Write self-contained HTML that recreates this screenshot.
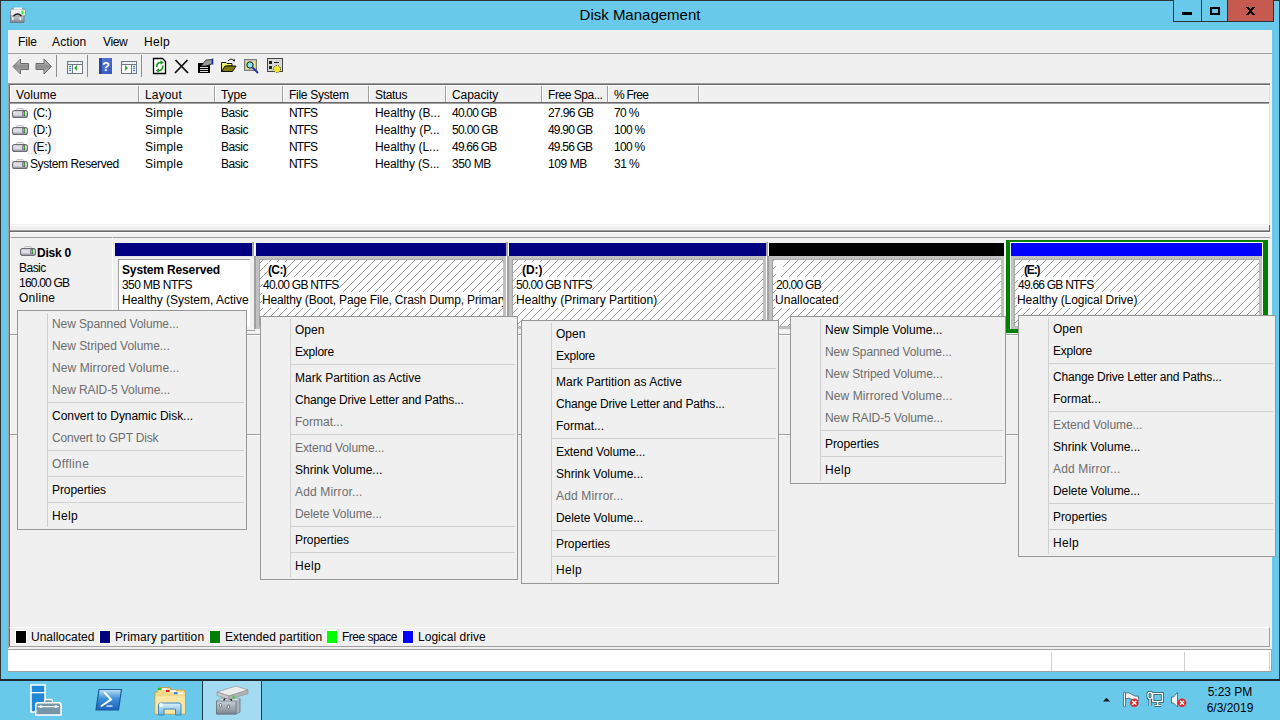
<!DOCTYPE html><html><head><meta charset="utf-8"><style>
html,body{margin:0;padding:0;}
body{width:1280px;height:720px;overflow:hidden;position:relative;background:#69c9ea;font-family:"Liberation Sans", sans-serif;font-size:12px;color:#000;}
div,span,svg{position:absolute;box-sizing:border-box;}
.t{white-space:pre;line-height:16px;letter-spacing:-0.2px;}
.d{color:#6d6d6d;}
.b{font-weight:bold;}
</style></head><body>
<div style="left:0px;top:0px;width:1280px;height:1px;background:#2e3436"></div>
<div style="left:0px;top:0px;width:1px;height:680px;background:#2e3436"></div>
<div style="left:1279px;top:0px;width:1px;height:680px;background:#2e3436"></div>
<div style="left:0px;top:679px;width:1280px;height:1px;background:#2e3436"></div>
<span class="t" style="left:0;top:6px;width:1280px;text-align:center;font-size:15px;line-height:18px;letter-spacing:0;color:#000">Disk Management</span>
<svg style="left:10px;top:7px" width="16" height="16" viewBox="0 0 16 16">
<defs><linearGradient id="tig" x1="0" y1="0" x2="0" y2="1"><stop offset="0" stop-color="#d0d8e0"/><stop offset="1" stop-color="#7a8290"/></linearGradient></defs>
<rect x="0.5" y="8.5" width="13.5" height="7" fill="url(#tig)" stroke="#6a7078" stroke-width="0.8"/>
<rect x="2" y="10.5" width="1.5" height="2.5" fill="#fff"/><rect x="9.5" y="10.5" width="1.5" height="2.5" fill="#fff"/>
<rect x="0.5" y="2" width="15" height="7" rx="1.5" fill="#ececf2" stroke="#7a7a80" stroke-width="0.8"/>
<rect x="4" y="0.5" width="8" height="2" fill="#f4f4f4"/>
<path d="M3.5 9 Q7.5 5 11.5 9" stroke="#222" stroke-width="1.3" fill="none"/>
<rect x="11.5" y="3.5" width="2" height="4" fill="#30f030"/>
</svg>
<div style="left:1173px;top:0px;width:29px;height:22px;border:1px solid #2e3436;border-top:none;background:#69c9ea"></div>
<div style="left:1201px;top:0px;width:27px;height:22px;border:1px solid #2e3436;border-top:none;background:#69c9ea"></div>
<div style="left:1227px;top:0px;width:47px;height:22px;border:1px solid #2e3436;border-top:none;background:#c65a4e"></div>
<div style="left:1182px;top:12px;width:10px;height:3px;background:#000"></div>
<div style="left:1210px;top:7px;width:10px;height:8px;border:2px solid #000;border-top-width:2px"></div>
<svg style="left:1246px;top:7px" width="9" height="8" viewBox="0 0 9 8" shape-rendering="crispEdges"><path d="M0 0h1v1h-1zM1 0h1v1h-1zM2 0h1v1h-1zM6 0h1v1h-1zM7 0h1v1h-1zM8 0h1v1h-1zM1 1h1v1h-1zM2 1h1v1h-1zM3 1h1v1h-1zM5 1h1v1h-1zM6 1h1v1h-1zM7 1h1v1h-1zM2 2h1v1h-1zM3 2h1v1h-1zM4 2h1v1h-1zM5 2h1v1h-1zM6 2h1v1h-1zM3 3h1v1h-1zM4 3h1v1h-1zM5 3h1v1h-1zM3 4h1v1h-1zM4 4h1v1h-1zM5 4h1v1h-1zM2 5h1v1h-1zM3 5h1v1h-1zM4 5h1v1h-1zM5 5h1v1h-1zM6 5h1v1h-1zM1 6h1v1h-1zM2 6h1v1h-1zM3 6h1v1h-1zM5 6h1v1h-1zM6 6h1v1h-1zM7 6h1v1h-1zM0 7h1v1h-1zM1 7h1v1h-1zM2 7h1v1h-1zM6 7h1v1h-1zM7 7h1v1h-1zM8 7h1v1h-1z" fill="#000"/></svg>
<div style="left:8px;top:30px;width:1264px;height:642px;background:#f0f0f0"></div>
<span class="t" style="left:18px;top:34px;;letter-spacing:-0.133px">File</span>
<span class="t" style="left:52px;top:34px;;letter-spacing:0.160px">Action</span>
<span class="t" style="left:103px;top:34px;;letter-spacing:-0.367px">View</span>
<span class="t" style="left:144px;top:34px;;letter-spacing:0.300px">Help</span>
<div style="left:8px;top:53px;width:1264px;height:1px;background:#a0a0a0"></div>
<svg style="left:0;top:0" width="300" height="80" viewBox="0 0 300 80">
<defs>
<linearGradient id="ag" x1="0" y1="0" x2="0" y2="1"><stop offset="0" stop-color="#d0d0d0"/><stop offset="0.5" stop-color="#8c8c8c"/><stop offset="1" stop-color="#c4c4c4"/></linearGradient>
<linearGradient id="hg" x1="0" y1="0" x2="1" y2="1"><stop offset="0" stop-color="#5a7fe0"/><stop offset="1" stop-color="#3455b8"/></linearGradient>
</defs>
<path d="M13 66.5 L20.5 59 V63.5 H28.5 V69.5 H20.5 V74 Z" fill="url(#ag)" stroke="#6a6a6a" stroke-linejoin="round"/>
<path d="M51.5 66.5 L44 59 V63.5 H36 V69.5 H44 V74 Z" fill="url(#ag)" stroke="#6a6a6a" stroke-linejoin="round"/>
<rect x="56" y="55" width="1" height="22" fill="#8c8c8c"/>
<rect x="67.5" y="61.5" width="15" height="12" fill="#fff" stroke="#707b88"/>
<rect x="68" y="62" width="14" height="3" fill="#dfe3e8"/>
<rect x="69" y="62.5" width="9" height="1" fill="#fff"/><rect x="79" y="62" width="1" height="2" fill="#fff"/><rect x="81" y="62" width="1" height="2" fill="#fff"/>
<rect x="68" y="64" width="14" height="1" fill="#707b88"/>
<rect x="72" y="65" width="1" height="8" fill="#707b88"/>
<rect x="68" y="65" width="4" height="8" fill="#e8edf2"/>
<rect x="69" y="66" width="2" height="1" fill="#3a80c8"/><rect x="69" y="68" width="2" height="1" fill="#3a80c8"/><rect x="69" y="70" width="2" height="1" fill="#3a80c8"/>
<path d="M77 65 L74 68 L77 71Z" fill="#30b030"/>
<rect x="87" y="55" width="1" height="22" fill="#8c8c8c"/>
<rect x="99" y="58" width="13" height="16" fill="url(#hg)"/>
<rect x="99" y="58" width="3" height="16" fill="#2a48a0"/>
<text x="106" y="71" font-size="13" font-family="Liberation Sans" font-weight="bold" fill="#fff" text-anchor="middle">?</text>
<rect x="121.5" y="61.5" width="15" height="12" fill="#fff" stroke="#707b88"/>
<rect x="122" y="62" width="14" height="3" fill="#dfe3e8"/>
<rect x="123" y="62.5" width="9" height="1" fill="#fff"/><rect x="133" y="62" width="1" height="2" fill="#fff"/><rect x="135" y="62" width="1" height="2" fill="#fff"/>
<rect x="122" y="64" width="14" height="1" fill="#707b88"/>
<rect x="131" y="65" width="1" height="8" fill="#707b88"/>
<rect x="132" y="65" width="4" height="8" fill="#e8edf2"/>
<rect x="133" y="66" width="2" height="1" fill="#3a80c8"/><rect x="133" y="68" width="2" height="1" fill="#3a80c8"/><rect x="133" y="70" width="2" height="1" fill="#3a80c8"/>
<path d="M125 65 L128 68 L125 71Z" fill="#30b030"/>
<rect x="141" y="55" width="1" height="22" fill="#8c8c8c"/>
<path d="M153.5 58.5 H162.5 L165.5 61.5 V73.5 H153.5 Z" fill="#fff" stroke="#000" stroke-width="1.3"/>
<path d="M156.8 67 Q156.5 62.5 161 62.5" stroke="#1e9a1e" stroke-width="1.7" fill="none"/>
<path d="M160.5 60.3 L163.8 62.5 L160.5 64.7Z" fill="#1e9a1e"/>
<path d="M162.8 65.5 Q163 70.5 158.5 70.5" stroke="#1e9a1e" stroke-width="1.7" fill="none"/>
<path d="M159 68.3 L155.7 70.5 L159 72.7Z" fill="#1e9a1e"/>
<path d="M175.5 60 L188 73 M187.5 60 L175 73" stroke="#111" stroke-width="1.8"/>
<rect x="198" y="63" width="12" height="10" fill="#000"/>
<rect x="200" y="67" width="8" height="1" fill="#e0e0e0"/><rect x="200" y="69" width="8" height="1" fill="#e0e0e0"/><rect x="200" y="71" width="8" height="1" fill="#e0e0e0"/>
<path d="M201 66 L206 60 L212 59.5 V64 L206 66Z" fill="#9a9a9a" stroke="#222" stroke-width="0.8"/>
<rect x="212" y="58.5" width="1.3" height="6" fill="#1a2ab0"/>
<path d="M221.5 62.5 H226 L227 63.5 H232 V66 H227 L225 71.5 H221.5 Z" fill="#f0f070" stroke="#000" stroke-width="0.9"/>
<path d="M225 66 H236 L232.5 71.5 H221.5Z" fill="#807a10" stroke="#000" stroke-width="0.9"/>
<path d="M228 61 Q231 57.5 234 60.5" stroke="#222" fill="none" stroke-width="1"/>
<path d="M234.5 58.5 L235 61.5 L232.5 61Z" fill="#222"/>
<rect x="244.5" y="59.5" width="12" height="11" fill="#c0c0c0" stroke="#7a7a7a"/>
<rect x="246" y="61" width="9" height="8" fill="#e8e890"/>
<circle cx="250" cy="65" r="3.2" fill="#80e8f0" stroke="#111" stroke-width="1"/>
<path d="M252.5 67.5 L258 73" stroke="#1a2ab0" stroke-width="1.8"/>
<rect x="267.5" y="58.5" width="15" height="13" fill="#d8d8d8" stroke="#444"/>
<rect x="269" y="61" width="3" height="3" fill="#222"/><rect x="269" y="66" width="3" height="3" fill="#222"/>
<rect x="274" y="62" width="5" height="1" fill="#222"/><rect x="274" y="67" width="3" height="1" fill="#222"/>
<circle cx="277" cy="69" r="3.6" fill="#f0e830" stroke="#333" stroke-width="0.8" stroke-dasharray="1.5 1"/>
</svg>
<div style="left:8px;top:83px;width:1262px;height:141px;background:#fff"></div>
<div style="left:8px;top:83px;width:1262px;height:1px;background:#a0a0a0"></div>
<div style="left:8px;top:84px;width:1262px;height:1px;background:#696969"></div>
<div style="left:8px;top:83px;width:1px;height:565px;background:#a0a0a0"></div>
<div style="left:9px;top:84px;width:1px;height:563px;background:#696969"></div>
<div style="left:1269px;top:85px;width:1px;height:139px;background:#e3e3e3"></div>
<div style="left:10px;top:85px;width:1259px;height:17px;background:#f0f0f0;border-top:1px solid #fff;border-left:1px solid #fff"></div>
<div style="left:10px;top:102px;width:1259px;height:1px;background:#696969"></div>
<div style="left:10px;top:103px;width:1259px;height:1px;background:#a0a0a0"></div>
<div style="left:138px;top:86px;width:1px;height:16px;background:#a0a0a0"></div>
<div style="left:139px;top:86px;width:1px;height:16px;background:#fff"></div>
<div style="left:214px;top:86px;width:1px;height:16px;background:#a0a0a0"></div>
<div style="left:215px;top:86px;width:1px;height:16px;background:#fff"></div>
<div style="left:282px;top:86px;width:1px;height:16px;background:#a0a0a0"></div>
<div style="left:283px;top:86px;width:1px;height:16px;background:#fff"></div>
<div style="left:368px;top:86px;width:1px;height:16px;background:#a0a0a0"></div>
<div style="left:369px;top:86px;width:1px;height:16px;background:#fff"></div>
<div style="left:445px;top:86px;width:1px;height:16px;background:#a0a0a0"></div>
<div style="left:446px;top:86px;width:1px;height:16px;background:#fff"></div>
<div style="left:541px;top:86px;width:1px;height:16px;background:#a0a0a0"></div>
<div style="left:542px;top:86px;width:1px;height:16px;background:#fff"></div>
<div style="left:607px;top:86px;width:1px;height:16px;background:#a0a0a0"></div>
<div style="left:608px;top:86px;width:1px;height:16px;background:#fff"></div>
<div style="left:698px;top:86px;width:1px;height:16px;background:#a0a0a0"></div>
<div style="left:699px;top:86px;width:1px;height:16px;background:#fff"></div>
<span class="t" style="left:16px;top:87px;;letter-spacing:0.100px">Volume</span>
<span class="t" style="left:145px;top:87px;;letter-spacing:0.150px">Layout</span>
<span class="t" style="left:221px;top:87px;;letter-spacing:-0.083px">Type</span>
<span class="t" style="left:289px;top:87px;;letter-spacing:-0.280px">File System</span>
<span class="t" style="left:375px;top:87px;;letter-spacing:-0.320px">Status</span>
<span class="t" style="left:452px;top:87px;;letter-spacing:-0.071px">Capacity</span>
<span class="t" style="left:548px;top:87px;;letter-spacing:-0.450px">Free Spa...</span>
<span class="t" style="left:614px;top:87px;;letter-spacing:-0.750px">% Free</span>
<div style="left:28px;top:138px;width:28px;height:17px;background:#f3f3f3"></div>
<svg style="left:12px;top:108px" width="16" height="10" viewBox="0 0 16 10"><defs><linearGradient id="dg12108" x1="0" y1="0" x2="0" y2="1"><stop offset="0" stop-color="#fafafc"/><stop offset="0.6" stop-color="#d8d8e4"/><stop offset="1" stop-color="#a0a0a8"/></linearGradient></defs><path d="M4.5 2.5 V1.5 Q4.5 0.5 5.5 0.5 H10.5 Q11.5 0.5 11.5 1.5 V2.5" fill="#ececec" stroke="#b8b8c0" stroke-width="0.8"/><rect x="0.6" y="2.6" width="14.8" height="6.8" rx="2" fill="url(#dg12108)" stroke="#6a6a72" stroke-width="1.1"/><rect x="3" y="4" width="8" height="3" fill="#dcdce8"/><rect x="10.5" y="3.2" width="2.6" height="4.6" fill="#402850"/><rect x="11" y="3.5" width="1.6" height="4" fill="#40f020"/></svg>
<span class="t" style="left:30px;top:105px;;letter-spacing:-0.375px"> (C:)</span>
<span class="t" style="left:145px;top:105px;;letter-spacing:0.250px">Simple</span>
<span class="t" style="left:221px;top:105px;;letter-spacing:-0.438px">Basic</span>
<span class="t" style="left:289px;top:105px;;letter-spacing:-0.800px">NTFS</span>
<span class="t" style="left:375px;top:105px;;letter-spacing:-0.067px">Healthy (B...</span>
<span class="t" style="left:452px;top:105px;;letter-spacing:-0.786px">40.00 GB</span>
<span class="t" style="left:548px;top:105px;;letter-spacing:-0.657px">27.96 GB</span>
<span class="t" style="left:614px;top:105px;;letter-spacing:-0.667px">70 %</span>
<svg style="left:12px;top:125px" width="16" height="10" viewBox="0 0 16 10"><defs><linearGradient id="dg12125" x1="0" y1="0" x2="0" y2="1"><stop offset="0" stop-color="#fafafc"/><stop offset="0.6" stop-color="#d8d8e4"/><stop offset="1" stop-color="#a0a0a8"/></linearGradient></defs><path d="M4.5 2.5 V1.5 Q4.5 0.5 5.5 0.5 H10.5 Q11.5 0.5 11.5 1.5 V2.5" fill="#ececec" stroke="#b8b8c0" stroke-width="0.8"/><rect x="0.6" y="2.6" width="14.8" height="6.8" rx="2" fill="url(#dg12125)" stroke="#6a6a72" stroke-width="1.1"/><rect x="3" y="4" width="8" height="3" fill="#dcdce8"/><rect x="10.5" y="3.2" width="2.6" height="4.6" fill="#402850"/><rect x="11" y="3.5" width="1.6" height="4" fill="#40f020"/></svg>
<span class="t" style="left:30px;top:122px;;letter-spacing:-0.375px"> (D:)</span>
<span class="t" style="left:145px;top:122px;;letter-spacing:0.250px">Simple</span>
<span class="t" style="left:221px;top:122px;;letter-spacing:-0.438px">Basic</span>
<span class="t" style="left:289px;top:122px;;letter-spacing:-0.800px">NTFS</span>
<span class="t" style="left:375px;top:122px;;letter-spacing:0.017px">Healthy (P...</span>
<span class="t" style="left:452px;top:122px;;letter-spacing:-0.643px">50.00 GB</span>
<span class="t" style="left:548px;top:122px;;letter-spacing:-0.800px">49.90 GB</span>
<span class="t" style="left:614px;top:122px;;letter-spacing:-0.688px">100 %</span>
<svg style="left:12px;top:142px" width="16" height="10" viewBox="0 0 16 10"><defs><linearGradient id="dg12142" x1="0" y1="0" x2="0" y2="1"><stop offset="0" stop-color="#fafafc"/><stop offset="0.6" stop-color="#d8d8e4"/><stop offset="1" stop-color="#a0a0a8"/></linearGradient></defs><path d="M4.5 2.5 V1.5 Q4.5 0.5 5.5 0.5 H10.5 Q11.5 0.5 11.5 1.5 V2.5" fill="#ececec" stroke="#b8b8c0" stroke-width="0.8"/><rect x="0.6" y="2.6" width="14.8" height="6.8" rx="2" fill="url(#dg12142)" stroke="#6a6a72" stroke-width="1.1"/><rect x="3" y="4" width="8" height="3" fill="#dcdce8"/><rect x="10.5" y="3.2" width="2.6" height="4.6" fill="#402850"/><rect x="11" y="3.5" width="1.6" height="4" fill="#40f020"/></svg>
<span class="t" style="left:30px;top:139px;;letter-spacing:-0.375px"> (E:)</span>
<span class="t" style="left:145px;top:139px;;letter-spacing:0.250px">Simple</span>
<span class="t" style="left:221px;top:139px;;letter-spacing:-0.438px">Basic</span>
<span class="t" style="left:289px;top:139px;;letter-spacing:-0.800px">NTFS</span>
<span class="t" style="left:375px;top:139px;;letter-spacing:-0.058px">Healthy (L...</span>
<span class="t" style="left:452px;top:139px;;letter-spacing:-0.786px">49.66 GB</span>
<span class="t" style="left:548px;top:139px;;letter-spacing:-0.800px">49.56 GB</span>
<span class="t" style="left:614px;top:139px;;letter-spacing:-0.688px">100 %</span>
<svg style="left:12px;top:159px" width="16" height="10" viewBox="0 0 16 10"><defs><linearGradient id="dg12159" x1="0" y1="0" x2="0" y2="1"><stop offset="0" stop-color="#fafafc"/><stop offset="0.6" stop-color="#d8d8e4"/><stop offset="1" stop-color="#a0a0a8"/></linearGradient></defs><path d="M4.5 2.5 V1.5 Q4.5 0.5 5.5 0.5 H10.5 Q11.5 0.5 11.5 1.5 V2.5" fill="#ececec" stroke="#b8b8c0" stroke-width="0.8"/><rect x="0.6" y="2.6" width="14.8" height="6.8" rx="2" fill="url(#dg12159)" stroke="#6a6a72" stroke-width="1.1"/><rect x="3" y="4" width="8" height="3" fill="#dcdce8"/><rect x="10.5" y="3.2" width="2.6" height="4.6" fill="#402850"/><rect x="11" y="3.5" width="1.6" height="4" fill="#40f020"/></svg>
<span class="t" style="left:30px;top:156px;;letter-spacing:-0.393px">System Reserved</span>
<span class="t" style="left:145px;top:156px;;letter-spacing:0.250px">Simple</span>
<span class="t" style="left:221px;top:156px;;letter-spacing:-0.438px">Basic</span>
<span class="t" style="left:289px;top:156px;;letter-spacing:-0.800px">NTFS</span>
<span class="t" style="left:375px;top:156px;;letter-spacing:-0.133px">Healthy (S...</span>
<span class="t" style="left:452px;top:156px;;letter-spacing:-0.420px">350 MB</span>
<span class="t" style="left:548px;top:156px;;letter-spacing:-0.400px">109 MB</span>
<span class="t" style="left:614px;top:156px;;letter-spacing:-0.533px">31 %</span>
<div style="left:10px;top:224px;width:1260px;height:8px;background:#f0f0f0"></div>
<div style="left:10px;top:225px;width:1259px;height:1px;background:#fff"></div>
<div style="left:10px;top:230px;width:1260px;height:1px;background:#a0a0a0"></div>
<div style="left:10px;top:231px;width:1260px;height:1px;background:#696969"></div>
<div style="left:1269px;top:225px;width:1px;height:6px;background:#696969"></div>
<div style="left:10px;top:232px;width:1260px;height:1px;background:#fff"></div>
<div style="left:10px;top:237px;width:103px;height:97px;background:#f0f0f0;border-top:1px solid #a0a0a0;border-right:1px solid #fff;border-left:1px solid #fff"></div>
<svg style="left:20px;top:246px" width="16" height="10" viewBox="0 0 16 10"><defs><linearGradient id="dg20246" x1="0" y1="0" x2="0" y2="1"><stop offset="0" stop-color="#fafafc"/><stop offset="0.6" stop-color="#d8d8e4"/><stop offset="1" stop-color="#a0a0a8"/></linearGradient></defs><path d="M4.5 2.5 V1.5 Q4.5 0.5 5.5 0.5 H10.5 Q11.5 0.5 11.5 1.5 V2.5" fill="#ececec" stroke="#b8b8c0" stroke-width="0.8"/><rect x="0.6" y="2.6" width="14.8" height="6.8" rx="2" fill="url(#dg20246)" stroke="#6a6a72" stroke-width="1.1"/><rect x="3" y="4" width="8" height="3" fill="#dcdce8"/><rect x="10.5" y="3.2" width="2.6" height="4.6" fill="#402850"/><rect x="11" y="3.5" width="1.6" height="4" fill="#40f020"/></svg>
<span class="t" style="left:37px;top:245px;font-weight:bold;letter-spacing:-0.240px">Disk 0</span>
<span class="t" style="left:19px;top:260px;;letter-spacing:-0.525px">Basic</span>
<span class="t" style="left:19px;top:275px;;letter-spacing:-0.787px">160.00 GB</span>
<span class="t" style="left:19px;top:290px;;letter-spacing:0.260px">Online</span>
<div style="left:113px;top:237px;width:1157px;height:97px;background:#f0f0f0;border-top:1px solid #a0a0a0"></div>
<div style="left:113px;top:331px;width:1157px;height:1px;background:#fbfbfb"></div>
<svg style="left:0;top:0" width="1280" height="720" shape-rendering="crispEdges"><defs><pattern id="h2" x="0" y="0" width="8" height="8" patternUnits="userSpaceOnUse"><path d="M0 2h1v1h-1zM1 1h1v1h-1zM2 0h1v1h-1zM3 7h1v1h-1zM4 6h1v1h-1zM5 5h1v1h-1zM6 4h1v1h-1zM7 3h1v1h-1z" fill="#a0a0a0"/></pattern><pattern id="h1" x="0" y="0" width="8" height="8" patternUnits="userSpaceOnUse"><path d="M0 1h1v1h-1zM1 0h1v1h-1zM2 7h1v1h-1zM3 6h1v1h-1zM4 5h1v1h-1zM5 4h1v1h-1zM6 3h1v1h-1zM7 2h1v1h-1z" fill="#a0a0a0"/></pattern></defs><rect x="115" y="243" width="137" height="13" fill="#000080"/><rect x="252" y="242" width="2" height="14" fill="#a8a8a8"/><rect x="254" y="242" width="1" height="14" fill="#fff"/><rect x="113" y="256" width="142" height="1" fill="#e4e4e4"/><rect x="113" y="330" width="142" height="1" fill="#a0a0a0"/><rect x="118" y="259" width="132" height="68" fill="#a0a0a0"/><rect x="119" y="260" width="131" height="67" fill="#fff"/><rect x="256" y="243" width="250" height="13" fill="#000080"/><rect x="254" y="256" width="2" height="73" fill="#a0a0a0"/><rect x="256" y="256" width="250" height="73" fill="#c0c0c0"/><rect x="259" y="259" width="244" height="67" fill="#a8a8a8"/><rect x="260" y="260" width="243" height="66" fill="#fff"/><rect x="260" y="260" width="243" height="66" fill="url(#h2)"/><rect x="506" y="242" width="2" height="14" fill="#a8a8a8"/><rect x="508" y="242" width="1" height="14" fill="#fff"/><rect x="506" y="256" width="1" height="73" fill="#fff"/><rect x="509" y="243" width="257" height="13" fill="#000080"/><rect x="507" y="256" width="2" height="73" fill="#a0a0a0"/><rect x="509" y="256" width="257" height="73" fill="#c0c0c0"/><rect x="512" y="259" width="251" height="67" fill="#a8a8a8"/><rect x="513" y="260" width="250" height="66" fill="#fff"/><rect x="513" y="260" width="250" height="66" fill="url(#h1)"/><rect x="766" y="242" width="2" height="14" fill="#a8a8a8"/><rect x="768" y="242" width="1" height="14" fill="#fff"/><rect x="766" y="256" width="1" height="73" fill="#fff"/><rect x="769" y="243" width="235" height="13" fill="#000000"/><rect x="767" y="256" width="2" height="73" fill="#a0a0a0"/><rect x="769" y="256" width="235" height="73" fill="#c0c0c0"/><rect x="772" y="259" width="229" height="67" fill="#a8a8a8"/><rect x="773" y="260" width="228" height="66" fill="#fff"/><rect x="773" y="260" width="228" height="66" fill="url(#h1)"/><rect x="1004" y="256" width="1" height="73" fill="#fff"/><rect x="1006" y="240" width="262" height="93" fill="#008000"/><rect x="1010" y="242" width="253" height="87" fill="#fff"/><rect x="1011" y="243" width="251" height="13" fill="#0000ff"/><rect x="1011" y="256" width="251" height="73" fill="#c0c0c0"/><rect x="1014" y="259" width="245" height="67" fill="#a8a8a8"/><rect x="1015" y="260" width="244" height="66" fill="#fff"/><rect x="1015" y="260" width="244" height="66" fill="url(#h1)"/></svg>
<span class="t" style="left:122px;top:262px;font-weight:bold;letter-spacing:-0.143px">System Reserved</span>
<span class="t" style="left:122px;top:277px;;letter-spacing:-0.560px">350 MB NTFS</span>
<span class="t" style="left:122px;top:292px;;letter-spacing:0.000px">Healthy (System, Active</span>
<div style="left:259px;top:259px;width:244px;height:67px;overflow:hidden">
<span class="t" style="left:9px;top:3px;font-weight:bold;background:#fff;letter-spacing:-0.633px">(C:)</span>
<span class="t" style="left:4px;top:18px;background:#fff;letter-spacing:-0.758px">40.00 GB NTFS</span>
<span class="t" style="left:3px;top:33px;background:#fff;letter-spacing:-0.150px">Healthy (Boot, Page File, Crash Dump, Primary Partition)</span>
</div>
<div style="left:512px;top:259px;width:251px;height:67px;overflow:hidden">
<span class="t" style="left:10px;top:3px;font-weight:bold;background:#fff;letter-spacing:-0.033px">(D:)</span>
<span class="t" style="left:4px;top:18px;background:#fff;letter-spacing:-0.742px">50.00 GB NTFS</span>
<span class="t" style="left:4px;top:33px;background:#fff;letter-spacing:0.019px">Healthy (Primary Partition)</span>
</div>
<div style="left:776px;top:260px;width:7px;height:15px;background:#fff"></div>
<div style="left:772px;top:259px;width:229px;height:67px;overflow:hidden">
<span class="t" style="left:4px;top:18px;background:#fff;letter-spacing:-0.714px">20.00 GB</span>
<span class="t" style="left:3px;top:33px;background:#fff;letter-spacing:0.020px">Unallocated</span>
</div>
<div style="left:1014px;top:259px;width:245px;height:67px;overflow:hidden">
<span class="t" style="left:10px;top:3px;font-weight:bold;background:#fff;letter-spacing:-1.133px">(E:)</span>
<span class="t" style="left:4px;top:18px;background:#fff;letter-spacing:-0.767px">49.66 GB NTFS</span>
<span class="t" style="left:3px;top:33px;background:#fff;letter-spacing:-0.045px">Healthy (Logical Drive)</span>
</div>
<div style="left:10px;top:334px;width:1260px;height:1px;background:#a0a0a0"></div>
<div style="left:10px;top:335px;width:1260px;height:1px;background:#fff"></div>
<div style="left:10px;top:335px;width:1px;height:99px;background:#fff"></div>
<div style="left:10px;top:434px;width:1260px;height:1px;background:#a0a0a0"></div>
<div style="left:10px;top:435px;width:1260px;height:1px;background:#fff"></div>
<div style="left:9px;top:627px;width:1261px;height:20px;background:#f0f0f0;border-top:1px solid #fff;border-left:1px solid #6a6a6a;border-bottom:1px solid #a0a0a0;border-right:1px solid #a0a0a0"></div>
<div style="left:15px;top:630px;width:12px;height:14px;background:#000;border:1px solid #fff"></div>
<span class="t" style="left:31px;top:629px;;letter-spacing:0.000px">Unallocated</span>
<div style="left:99px;top:630px;width:12px;height:14px;background:#000080;border:1px solid #fff"></div>
<span class="t" style="left:115px;top:629px;;letter-spacing:0.106px">Primary partition</span>
<div style="left:209px;top:630px;width:12px;height:14px;background:#008000;border:1px solid #fff"></div>
<span class="t" style="left:225px;top:629px;;letter-spacing:0.024px">Extended partition</span>
<div style="left:326px;top:630px;width:12px;height:14px;background:#00ff00;border:1px solid #fff"></div>
<span class="t" style="left:342px;top:629px;;letter-spacing:-0.511px">Free space</span>
<div style="left:402px;top:630px;width:12px;height:14px;background:#0000ff;border:1px solid #fff"></div>
<span class="t" style="left:418px;top:629px;;letter-spacing:0.025px">Logical drive</span>
<div style="left:8px;top:649px;width:1264px;height:23px;background:#fff;border-top:1px solid #a0a0a0;border-bottom:1px solid #a0a0a0;border-right:1px solid #a0a0a0"></div>
<div style="left:1051px;top:652px;width:1px;height:19px;background:#d0d0d0"></div>
<div style="left:1184px;top:652px;width:1px;height:19px;background:#d0d0d0"></div>
<div style="left:1269px;top:652px;width:1px;height:19px;background:#d0d0d0"></div>
<div style="left:17px;top:310px;width:230px;height:220px;background:#f0f0f0;border:1px solid #979797"></div>
<div style="left:47px;top:313px;width:1px;height:214px;background:#d0d0d0"></div>
<span class="t" style="left:52px;top:316px;color:#6d6d6d;letter-spacing:-0.100px">New Spanned Volume...</span>
<span class="t" style="left:52px;top:338px;color:#6d6d6d;letter-spacing:-0.050px">New Striped Volume...</span>
<span class="t" style="left:52px;top:360px;color:#6d6d6d;letter-spacing:0.095px">New Mirrored Volume...</span>
<span class="t" style="left:52px;top:382px;color:#6d6d6d;letter-spacing:-0.105px">New RAID-5 Volume...</span>
<div style="left:47px;top:402px;width:197px;height:1px;background:#d0d0d0"></div>
<span class="t" style="left:52px;top:408px;;letter-spacing:-0.040px">Convert to Dynamic Disk...</span>
<span class="t" style="left:52px;top:430px;color:#6d6d6d;letter-spacing:-0.183px">Convert to GPT Disk</span>
<div style="left:47px;top:450px;width:197px;height:1px;background:#d0d0d0"></div>
<span class="t" style="left:52px;top:456px;color:#6d6d6d;letter-spacing:0.400px">Offline</span>
<div style="left:47px;top:476px;width:197px;height:1px;background:#d0d0d0"></div>
<span class="t" style="left:52px;top:482px;;letter-spacing:-0.067px">Properties</span>
<div style="left:47px;top:502px;width:197px;height:1px;background:#d0d0d0"></div>
<span class="t" style="left:52px;top:508px;;letter-spacing:0.333px">Help</span>
<div style="left:260px;top:316px;width:258px;height:264px;background:#f0f0f0;border:1px solid #979797"></div>
<div style="left:290px;top:319px;width:1px;height:258px;background:#d0d0d0"></div>
<span class="t" style="left:295px;top:322px;;letter-spacing:0.000px">Open</span>
<span class="t" style="left:295px;top:344px;;letter-spacing:-0.233px">Explore</span>
<div style="left:290px;top:364px;width:225px;height:1px;background:#d0d0d0"></div>
<span class="t" style="left:295px;top:370px;;letter-spacing:0.026px">Mark Partition as Active</span>
<span class="t" style="left:295px;top:392px;;letter-spacing:-0.194px">Change Drive Letter and Paths...</span>
<span class="t" style="left:295px;top:414px;color:#6d6d6d;letter-spacing:0.000px">Format...</span>
<div style="left:290px;top:434px;width:225px;height:1px;background:#d0d0d0"></div>
<span class="t" style="left:295px;top:440px;color:#6d6d6d;letter-spacing:-0.093px">Extend Volume...</span>
<span class="t" style="left:295px;top:462px;;letter-spacing:0.000px">Shrink Volume...</span>
<span class="t" style="left:295px;top:484px;color:#6d6d6d;letter-spacing:0.167px">Add Mirror...</span>
<span class="t" style="left:295px;top:506px;color:#6d6d6d;letter-spacing:-0.067px">Delete Volume...</span>
<div style="left:290px;top:526px;width:225px;height:1px;background:#d0d0d0"></div>
<span class="t" style="left:295px;top:532px;;letter-spacing:-0.067px">Properties</span>
<div style="left:290px;top:552px;width:225px;height:1px;background:#d0d0d0"></div>
<span class="t" style="left:295px;top:558px;;letter-spacing:0.333px">Help</span>
<div style="left:521px;top:320px;width:258px;height:264px;background:#f0f0f0;border:1px solid #979797"></div>
<div style="left:551px;top:323px;width:1px;height:258px;background:#d0d0d0"></div>
<span class="t" style="left:556px;top:326px;;letter-spacing:0.000px">Open</span>
<span class="t" style="left:556px;top:348px;;letter-spacing:-0.233px">Explore</span>
<div style="left:551px;top:368px;width:225px;height:1px;background:#d0d0d0"></div>
<span class="t" style="left:556px;top:374px;;letter-spacing:0.026px">Mark Partition as Active</span>
<span class="t" style="left:556px;top:396px;;letter-spacing:-0.194px">Change Drive Letter and Paths...</span>
<span class="t" style="left:556px;top:418px;;letter-spacing:0.000px">Format...</span>
<div style="left:551px;top:438px;width:225px;height:1px;background:#d0d0d0"></div>
<span class="t" style="left:556px;top:444px;;letter-spacing:-0.093px">Extend Volume...</span>
<span class="t" style="left:556px;top:466px;;letter-spacing:0.000px">Shrink Volume...</span>
<span class="t" style="left:556px;top:488px;color:#6d6d6d;letter-spacing:0.167px">Add Mirror...</span>
<span class="t" style="left:556px;top:510px;;letter-spacing:-0.067px">Delete Volume...</span>
<div style="left:551px;top:530px;width:225px;height:1px;background:#d0d0d0"></div>
<span class="t" style="left:556px;top:536px;;letter-spacing:-0.067px">Properties</span>
<div style="left:551px;top:556px;width:225px;height:1px;background:#d0d0d0"></div>
<span class="t" style="left:556px;top:562px;;letter-spacing:0.333px">Help</span>
<div style="left:790px;top:316px;width:216px;height:168px;background:#f0f0f0;border:1px solid #979797"></div>
<div style="left:820px;top:319px;width:1px;height:162px;background:#d0d0d0"></div>
<span class="t" style="left:825px;top:322px;;letter-spacing:0.000px">New Simple Volume...</span>
<span class="t" style="left:825px;top:344px;color:#6d6d6d;letter-spacing:-0.100px">New Spanned Volume...</span>
<span class="t" style="left:825px;top:366px;color:#6d6d6d;letter-spacing:-0.050px">New Striped Volume...</span>
<span class="t" style="left:825px;top:388px;color:#6d6d6d;letter-spacing:0.095px">New Mirrored Volume...</span>
<span class="t" style="left:825px;top:410px;color:#6d6d6d;letter-spacing:-0.105px">New RAID-5 Volume...</span>
<div style="left:820px;top:430px;width:183px;height:1px;background:#d0d0d0"></div>
<span class="t" style="left:825px;top:436px;;letter-spacing:-0.067px">Properties</span>
<div style="left:820px;top:456px;width:183px;height:1px;background:#d0d0d0"></div>
<span class="t" style="left:825px;top:462px;;letter-spacing:0.333px">Help</span>
<div style="left:1018px;top:315px;width:258px;height:242px;background:#f0f0f0;border:1px solid #979797"></div>
<div style="left:1048px;top:318px;width:1px;height:236px;background:#d0d0d0"></div>
<span class="t" style="left:1053px;top:321px;;letter-spacing:0.000px">Open</span>
<span class="t" style="left:1053px;top:343px;;letter-spacing:-0.233px">Explore</span>
<div style="left:1048px;top:363px;width:225px;height:1px;background:#d0d0d0"></div>
<span class="t" style="left:1053px;top:369px;;letter-spacing:-0.194px">Change Drive Letter and Paths...</span>
<span class="t" style="left:1053px;top:391px;;letter-spacing:0.000px">Format...</span>
<div style="left:1048px;top:411px;width:225px;height:1px;background:#d0d0d0"></div>
<span class="t" style="left:1053px;top:417px;color:#6d6d6d;letter-spacing:-0.093px">Extend Volume...</span>
<span class="t" style="left:1053px;top:439px;;letter-spacing:0.000px">Shrink Volume...</span>
<span class="t" style="left:1053px;top:461px;color:#6d6d6d;letter-spacing:0.167px">Add Mirror...</span>
<span class="t" style="left:1053px;top:483px;;letter-spacing:-0.067px">Delete Volume...</span>
<div style="left:1048px;top:503px;width:225px;height:1px;background:#d0d0d0"></div>
<span class="t" style="left:1053px;top:509px;;letter-spacing:-0.067px">Properties</span>
<div style="left:1048px;top:529px;width:225px;height:1px;background:#d0d0d0"></div>
<span class="t" style="left:1053px;top:535px;;letter-spacing:0.333px">Help</span>
<div style="left:0px;top:680px;width:1280px;height:40px;background:#69c9ea"></div>
<div style="left:0px;top:679px;width:1280px;height:2px;background:#1f2a30"></div>
<div style="left:202px;top:681px;width:60px;height:39px;background:#a3dcf2"></div>
<div style="left:202px;top:680px;width:1px;height:40px;background:#1f3a48"></div>
<div style="left:261px;top:680px;width:1px;height:40px;background:#1f3a48"></div>
<svg style="left:0;top:680px" width="1280" height="40" viewBox="0 680 1280 40">
<defs>
<linearGradient id="psg" x1="0" y1="0" x2="0" y2="1"><stop offset="0" stop-color="#b8e0f4"/><stop offset="0.45" stop-color="#3a90d8"/><stop offset="1" stop-color="#1e62c0"/></linearGradient>
<linearGradient id="dkg" x1="0" y1="0" x2="0" y2="1"><stop offset="0" stop-color="#f4f4f4"/><stop offset="1" stop-color="#a8a8a8"/></linearGradient>
<linearGradient id="tbg" x1="0" y1="0" x2="0" y2="1"><stop offset="0" stop-color="#c8d4dc"/><stop offset="1" stop-color="#7a848c"/></linearGradient>
<linearGradient id="fhg" x1="0" y1="0" x2="0" y2="1"><stop offset="0" stop-color="#d8f2fc"/><stop offset="1" stop-color="#6ab4e0"/></linearGradient>
</defs>
<rect x="31" y="685" width="14" height="27" fill="#2187d8" stroke="#fff" stroke-width="1.5"/>
<rect x="31" y="692" width="14" height="1.3" fill="#fff"/>
<path d="M44.5 702.5 V701 Q44.5 699.5 46 699.5 H51 Q52.5 699.5 52.5 701 V702.5" fill="#7896a8" stroke="#fff" stroke-width="1.3"/>
<path d="M35.75 715 V705 Q35.75 702.75 38 702.75 H59 Q61 702.75 61 705 V715 Z" fill="#7896a8" stroke="#fff" stroke-width="1.5"/>
<rect x="38" y="706" width="21" height="1.2" fill="#fff"/>
<circle cx="41" cy="706.6" r="1.4" fill="#dff"/><circle cx="56" cy="706.6" r="1.4" fill="#dff"/>
<path d="M99 689.5 H121.5 L118.5 710 H96 Z" fill="url(#psg)" stroke="#1a5a98" stroke-width="1.2"/>
<path d="M104.5 692.5 L111 699.5 L101.5 706" stroke="#fff" stroke-width="2" fill="none" stroke-linecap="round"/>
<rect x="106.5" y="705.3" width="6" height="1.5" fill="#c8e4f8"/>
<path d="M155 714 V692 H157 L159 687.5 H170 L171 690 H184 L185.5 692 V714 Z" fill="#f4d98a" stroke="#c8a050" stroke-width="1"/>
<path d="M155.5 696 H185 V713.5 H155.5Z" fill="#f8e6a4"/>
<rect x="158" y="688" width="3.5" height="2" fill="#20c020"/><rect x="162" y="688.3" width="5" height="1.7" fill="#fff"/>
<rect x="166" y="690" width="3.5" height="2" fill="#d82020"/><rect x="170" y="690.3" width="6" height="1.7" fill="#fff"/>
<rect x="174" y="692.2" width="3.5" height="2" fill="#2080e0"/><rect x="178" y="692.5" width="5" height="1.7" fill="#fff"/>
<path d="M158.5 715 V705 Q158.5 703 160.5 703 H179 Q181 703 181 705 V715 H175.5 V709 H164 V715 Z" fill="url(#fhg)" stroke="#3a88c0" stroke-width="1"/>
<circle cx="161" cy="705" r="2" fill="#fff" opacity="0.9"/>
<path d="M216.5 701 L221 698.5 H240 V712 L236 714 H216.5 Z" fill="#a8b0b8" stroke="#6a747c" stroke-width="0.8"/>
<path d="M216.5 701 L221 698.5 H240 L236 701 Z" fill="#d4dce2"/>
<path d="M216.5 701 H236 V714 H216.5Z" fill="url(#tbg)" stroke="#6a747c" stroke-width="0.8"/>
<rect x="219.5" y="703.5" width="2" height="3.5" rx="1" fill="#fff" stroke="#334" stroke-width="0.6"/>
<rect x="227.5" y="705" width="2" height="3.5" rx="1" fill="#fff" stroke="#334" stroke-width="0.6"/>
<path d="M223.5 700.5 Q227 694.5 232 700.5" stroke="#111" stroke-width="1.3" fill="none"/>
<path d="M217 692 L236 686 L248 690 L229 696 Z" fill="#ececec" stroke="#909090" stroke-width="0.7"/>
<path d="M217 692 L229 696 V699.5 L217 695.5 Z" fill="#c8c8c8" stroke="#909090" stroke-width="0.7"/>
<path d="M229 696 L248 690 V693.5 L229 699.5 Z" fill="#b4b4b4" stroke="#909090" stroke-width="0.7"/>
<rect x="232.5" y="695.5" width="2" height="3" fill="#30e030"/>
<path d="M1103 701.5 L1106.5 697.8 L1110 701.5Z" fill="#1a1a1a"/>
<rect x="1123.5" y="692.3" width="2" height="14.5" rx="0.8" fill="#fff" stroke="#1a3a48" stroke-width="0.6"/>
<path d="M1125.5 693 Q1129 692 1132 694.5 Q1135 697 1138.5 696 V700.5 Q1135 701.5 1132 699.5 Q1129 697 1125.5 699Z" fill="#f4f4f4" stroke="#1a3a48" stroke-width="0.6"/>
<circle cx="1134.3" cy="702.8" r="4.3" fill="#e02828"/>
<path d="M1132.3 700.8 L1136.3 704.8 M1136.3 700.8 L1132.3 704.8" stroke="#fff" stroke-width="1.5"/>
<g stroke="#1a4a58" stroke-width="2.8" fill="none"><rect x="1148" y="692.5" width="4" height="6" rx="1.5"/><path d="M1150 698.5 V706"/><rect x="1152.8" y="693.5" width="9.5" height="8"/><path d="M1154.5 705.3 H1161 M1157.8 702 V705.3"/></g>
<g stroke="#fff" stroke-width="1.3" fill="none"><rect x="1148" y="692.5" width="4" height="6" rx="1.5"/><path d="M1150 698.5 V706"/><rect x="1152.8" y="693.5" width="9.5" height="8"/><path d="M1154.5 705.3 H1161 M1157.8 702 V705.3"/></g>
<path d="M1171.5 697 H1173.5 L1177.5 692.5 V707 L1173.5 703 H1171.5Z" fill="#f4f4f4" stroke="#1a3a48" stroke-width="0.6"/>
<circle cx="1182" cy="702.8" r="4.3" fill="#e02828"/>
<path d="M1180 700.8 L1184 704.8 M1184 700.8 L1180 704.8" stroke="#fff" stroke-width="1.5"/>
</svg>
<span class="t" style="left:1180px;top:684px;width:100px;text-align:center;letter-spacing:0;line-height:16px">5:23 PM</span>
<span class="t" style="left:1180px;top:700px;width:100px;text-align:center;letter-spacing:0;line-height:16px">6/3/2019</span>
</body></html>
